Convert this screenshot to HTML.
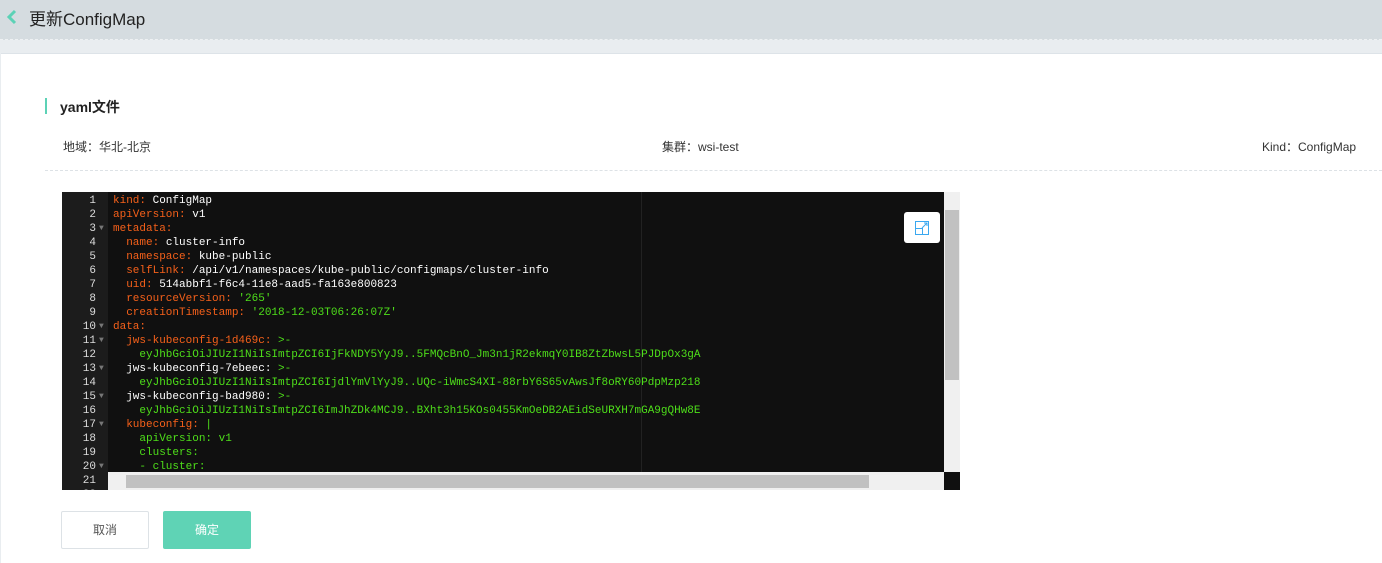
<!DOCTYPE html>
<html><head><meta charset="utf-8"><style>
*{margin:0;padding:0;box-sizing:border-box}
body{width:1382px;height:563px;background:#e9edf0;font-family:"Liberation Sans","Noto Sans CJK SC",sans-serif;position:relative;overflow:hidden}
.top{position:absolute;left:0;top:0;width:1382px;height:40px;background:#d5dce0;border-bottom:1px dashed #eef1f3}
.top .t{position:absolute;left:29px;top:5px;font-size:17px;color:#222}
.card{position:absolute;left:1px;top:53px;width:1381px;height:510px;background:#fff;border-top:1px solid #dde3e8}
.abs{position:absolute}
.ed{position:absolute;left:62px;top:192px;width:898px;height:298px;background:#101010;overflow:hidden;font-family:"Liberation Mono",monospace;font-size:11px}
.gut{position:absolute;left:0;top:0;width:46px;height:298px;background:#1c1c1c;color:#ddd}
.ln{position:absolute;height:14px;line-height:14px;white-space:pre}
.k{color:#f5601a}.w{color:#fff}.g{color:#4ede1a}
</style></head><body>
<div class="top"><svg class="abs" style="left:6px;top:9px" width="12" height="16"><path d="M9 2 L3 8 L9 14" stroke="#5cd2b6" stroke-width="3" fill="none"/></svg><div class="t">更新ConfigMap</div></div>
<div class="card"></div>
<div class="abs" style="left:45px;top:98px;width:2px;height:16px;background:#5cd2b6"></div>
<div class="abs" style="left:60px;top:97px;font-size:14px;font-weight:bold;color:#222">yaml文件</div>
<div class="abs" style="left:63px;top:138px;font-size:12px;color:#333">地域：华北-北京</div>
<div class="abs" style="left:662px;top:138px;font-size:12px;color:#333">集群：wsi-test</div>
<div class="abs" style="left:1262px;top:138px;font-size:12px;color:#333">Kind：ConfigMap</div>
<div class="abs" style="left:45px;top:170px;width:1337px;border-top:1px dashed #dde2e6"></div>
<div class="ed">
<div class="gut"></div>
<div class="abs" style="left:579px;top:0;width:1px;height:298px;background:#222"></div>
<div id="c"></div>
<div class="abs" style="left:842px;top:20px;width:36px;height:31px;background:#fff;border-radius:3px"><svg class="abs" style="left:11px;top:9px" width="14" height="14"><rect x="0.5" y="0.5" width="13" height="13" fill="none" stroke="#3aa8f0"/><path d="M0.5 7.5H7.5V13.5M7 7L12 2M9 2H12V5" stroke="#3aa8f0" fill="none"/></svg></div>
<div class="abs" style="left:882px;top:0;width:16px;height:280px;background:#f0f0f0"></div>
<div class="abs" style="left:883px;top:18px;width:14px;height:170px;background:#c1c1c1"></div>
<div class="abs" style="left:46px;top:280px;width:836px;height:18px;background:#f0f0f0"></div>
<div class="abs" style="left:64px;top:283px;width:743px;height:13px;background:#c1c1c1"></div>
</div>
<div class="abs" style="left:61px;top:511px;width:88px;height:38px;border:1px solid #dde2e6;border-radius:2px;font-size:12px;color:#555;text-align:center;line-height:36px;background:#fff">取消</div>
<div class="abs" style="left:163px;top:511px;width:88px;height:38px;border-radius:2px;font-size:12px;color:#fff;text-align:center;line-height:38px;background:#5fd3b5">确定</div>
<script>
var L=[
['<span class=k>kind: </span><span class=w>ConfigMap</span>'],
['<span class=k>apiVersion: </span><span class=w>v1</span>'],
['<span class=k>metadata:</span>',1],
['  <span class=k>name: </span><span class=w>cluster-info</span>'],
['  <span class=k>namespace: </span><span class=w>kube-public</span>'],
['  <span class=k>selfLink: </span><span class=w>/api/v1/namespaces/kube-public/configmaps/cluster-info</span>'],
['  <span class=k>uid: </span><span class=w>514abbf1-f6c4-11e8-aad5-fa163e800823</span>'],
['  <span class=k>resourceVersion: </span><span class=g>\'265\'</span>'],
['  <span class=k>creationTimestamp: </span><span class=g>\'2018-12-03T06:26:07Z\'</span>'],
['<span class=k>data:</span>',1],
['  <span class=k>jws-kubeconfig-1d469c: </span><span class=g>&gt;-</span>',1],
['    <span class=g>eyJhbGciOiJIUzI1NiIsImtpZCI6IjFkNDY5YyJ9..5FMQcBnO_Jm3n1jR2ekmqY0IB8ZtZbwsL5PJDpOx3gA</span>'],
['  <span class=w>jws-kubeconfig-7ebeec: </span><span class=g>&gt;-</span>',1],
['    <span class=g>eyJhbGciOiJIUzI1NiIsImtpZCI6IjdlYmVlYyJ9..UQc-iWmcS4XI-88rbY6S65vAwsJf8oRY60PdpMzp218</span>'],
['  <span class=w>jws-kubeconfig-bad980: </span><span class=g>&gt;-</span>',1],
['    <span class=g>eyJhbGciOiJIUzI1NiIsImtpZCI6ImJhZDk4MCJ9..BXht3h15KOs0455KmOeDB2AEidSeURXH7mGA9gQHw8E</span>'],
['  <span class=k>kubeconfig: </span><span class=g>|</span>',1],
['    <span class=g>apiVersion: v1</span>'],
['    <span class=g>clusters:</span>'],
['    <span class=g>- cluster:</span>',1],
[''],['']];
var h='';L.forEach(function(l,i){var y=2+i*14;h+='<div class="ln" style="left:0;top:'+y+'px;width:34px;text-align:right;color:#ddd">'+(i+1)+'</div>';if(l[1])h+='<div class="ln" style="left:37px;top:'+y+'px;color:#777;font-size:8px">▼</div>';h+='<div class="ln" style="left:51px;top:'+y+'px">'+l[0]+'</div>';});
document.getElementById('c').innerHTML=h;
</script>
</body></html>
